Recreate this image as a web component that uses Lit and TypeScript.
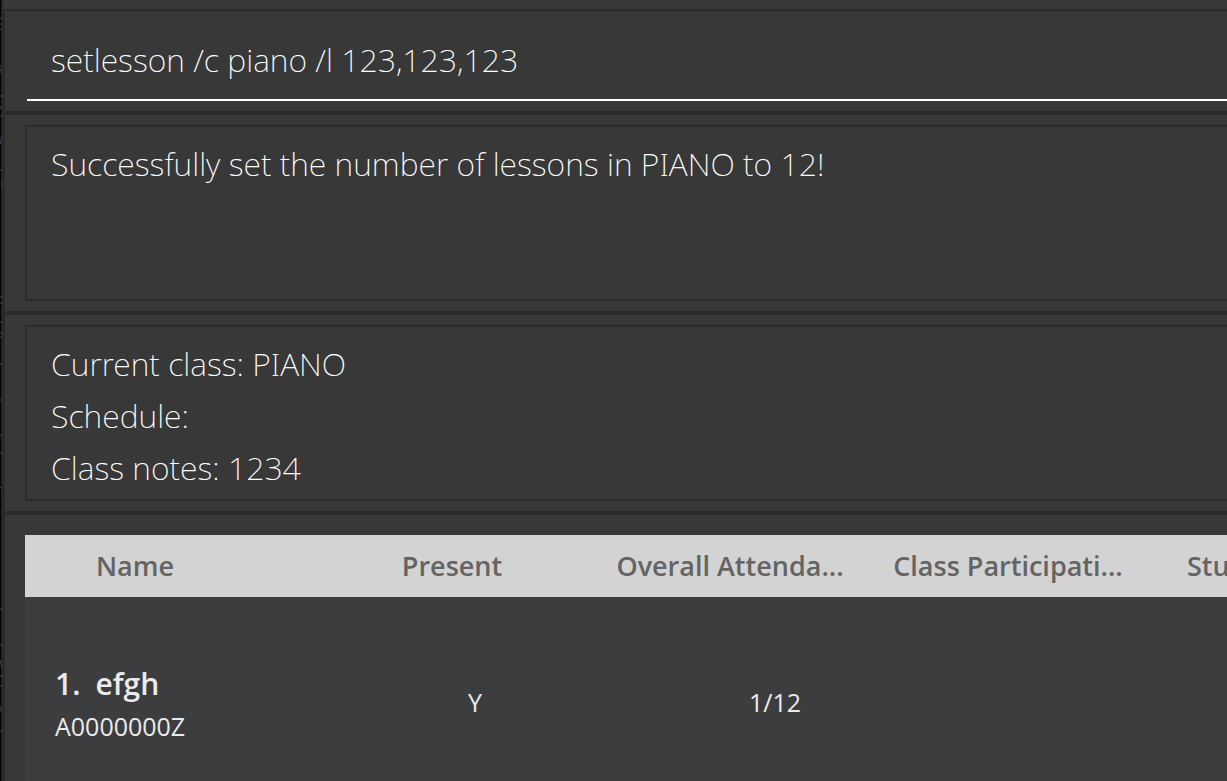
import { LitElement, html, css } from "lit";
import { customElement, state } from "lit/decorators.js";

interface Student {
  name: string;
  id: string;
  present: string;
  attendance: string;
}

@customElement("app-root")
export class AppRoot extends LitElement {
  static styles = css`
    :host {
      display: grid;
      grid-template-columns: 3px minmax(0, 1fr);
      grid-template-rows: minmax(0, 1fr);
      height: 100vh;
      overflow: hidden;
      background: #383838;
      color: #ffffff;
      font-family: "Open Sans", "Noto Sans", sans-serif;
    }
    .edge {
      width: 3px;
      height: 100%;
      background: linear-gradient(90deg, #000000 1px, #262626 1px);
    }
    .mark {
      stroke: #4a4060;
      fill: none;
    }
    .window {
      display: flex;
      flex-direction: column;
      padding-top: 9px;
      min-width: 0;
    }
    .panel {
      box-sizing: border-box;
      flex: none;
      border: 2px solid #2b2b2b;
      border-right: 0;
      padding: 10px 0 10px 20px;
    }
    .command-panel {
      padding-left: 22px;
    }
    .command,
    .area {
      box-sizing: border-box;
      display: block;
      width: 100%;
      background: transparent;
      color: inherit;
      font: 200 32px/52px "Noto Sans", "Open Sans", sans-serif;
      outline: none;
    }
    .command {
      height: 80px;
      border: 0;
      border-bottom: 2px solid #ffffff;
      padding: 0 24px 2px;
    }
    .area {
      height: 176px;
      border: 2px solid #2b2b2b;
      border-right: 0;
      padding: 11px 24px 0;
      resize: none;
      overflow: hidden;
    }
    .list {
      flex: 1;
      border-bottom: 0;
      padding: 20px 0 0 20px;
      overflow: hidden;
    }
    .students {
      display: block;
      overflow: hidden;
    }
    .students thead,
    .students tbody {
      display: block;
    }
    .head,
    .row {
      display: grid;
      align-items: center;
    }
    .head {
      grid-template-columns: 268px repeat(4, 238px);
      column-gap: 40px;
      height: 62px;
      background: #d3d3d3;
      color: #646464;
    }
    .head th {
      padding: 0;
      font-size: 27px;
      line-height: 38px;
      font-weight: 600;
      text-align: center;
      white-space: nowrap;
    }
    .head .name {
      padding-right: 48px;
    }
    .head .next {
      padding-left: 20px;
      text-align: left;
    }
    .row {
      grid-template-columns: repeat(4, 300px);
      min-height: 210px;
      background: #3c3d3f;
      color: #ebebeb;
    }
    .row td {
      padding: 0;
      font-size: 25px;
      line-height: 36px;
      text-align: center;
    }
    .row .who {
      padding-left: 30px;
      text-align: left;
    }
    .title {
      display: flex;
      gap: 15px;
      font-size: 30px;
      line-height: 48px;
      font-weight: 600;
    }
  `;

  @state() private command = "setlesson /c piano /l 123,123,123";
  @state() private result = "Successfully set the number of lessons in PIANO to 12!";
  @state() private info = "Current class: PIANO\nSchedule:\nClass notes: 1234";
  @state() private students: Student[] = [
    { name: "efgh", id: "A0000000Z", present: "Y", attendance: "1/12" },
  ];

  render() {
    return html`
      <svg class="edge" viewBox="0 0 3 781" preserveAspectRatio="xMinYMin slice" aria-hidden="true">
        <path
          class="mark"
          d="M0 18h3M0 24h2M0 29h3M0 66h2M1 68v5M0 96h3M0 106l2 4M0 116h3M2 136l-2 8M0 170h2M2 182v5M0 297h2M0 303h3M0 322h2M0 333h3M0 337h2M0 364h2M0 400h2M0 436l2-2M0 453h3M0 487l2 2M0 609h3M0 645h3M0 660l2 8M0 676h3M0 686h2M1 706v6M0 731h3"
        />
      </svg>
      <main class="window">
        <section class="panel command-panel">
          <input
            class="command"
            aria-label="Command"
            .value=${this.command}
            @input=${(e: Event) => (this.command = (e.target as HTMLInputElement).value)}
          />
        </section>
        <section class="panel">
          <textarea class="area" aria-label="Result" readonly .value=${this.result}></textarea>
        </section>
        <section class="panel">
          <textarea class="area" aria-label="Class" readonly .value=${this.info}></textarea>
        </section>
        <section class="panel list">
          <table class="students">
            <thead>
              <tr class="head">
                <th scope="col" class="name">Name</th>
                <th scope="col">Present</th>
                <th scope="col">Overall Attenda...</th>
                <th scope="col">Class Participati...</th>
                <th scope="col" class="next">Stu</th>
              </tr>
            </thead>
            <tbody>
              ${this.students.map(
                (s, i) => html`
                  <tr class="row">
                    <td class="who">
                      <div class="title"><span>${i + 1}.</span><span>${s.name}</span></div>
                      <div>${s.id}</div>
                    </td>
                    <td>${s.present}</td>
                    <td>${s.attendance}</td>
                  </tr>
                `,
              )}
            </tbody>
          </table>
        </section>
      </main>
    `;
  }
}
